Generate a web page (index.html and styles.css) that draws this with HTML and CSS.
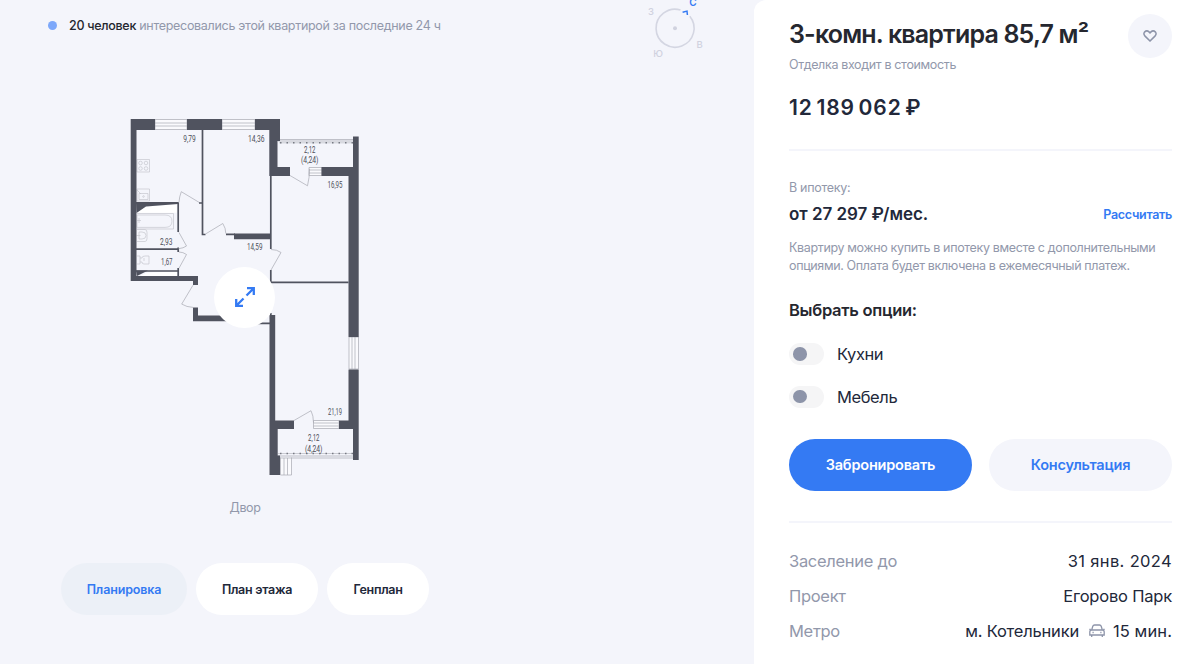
FILE: index.html
```html
<!DOCTYPE html>
<html lang="ru">
<head>
  <meta charset="UTF-8" />
  <meta name="viewport" content="width=device-width, initial-scale=1.0" />
  <title>3-комн. квартира 85,7 м²</title>
  <link rel="stylesheet" href="styles.css">
</head>
<body>

  <main class="plan">
    <div class="viewers"><i class="dot"></i><span class="viewers-text"><b>20 человек</b> интересовались этой квартирой за последние 24 ч</span></div>

    <svg class="compass" viewBox="644 0 64 62">
      <path class="ring" d="M680.500 10A19 19 0 1 0 689.800 16.200" />
      <circle cx="675" cy="28.200" r="2" />
      <path class="arrow" d="M682.600 12.300l4.400-1.200.4 3.900" />
      <text x="651" y="14.500">З</text>
      <text x="699.500" y="47.500">В</text>
      <text x="658" y="57">Ю</text>
      <text class="north" x="693" y="5.500">С</text>
    </svg>

    <div class="layout">
      <svg class="drawing" viewBox="130 118 230 358">
        <!-- fixtures -->
        <g class="fixture">
          <path d="M137 159.500h12.500v12.500H137zM137 189h12.500v12H137zM139 193.500h9v6h-9zM137 190l4 4" />
          <circle cx="140.500" cy="163" r="1.800" /><circle cx="146" cy="163" r="1.800" />
          <circle cx="140.500" cy="168.500" r="1.800" /><circle cx="146" cy="168.500" r="1.800" />
          <circle cx="143.500" cy="196.500" r=".8" />
          <path d="M137 213.500h36.500V229H137M137 215h28q7 0 7 6.200t-7 6.200h-28zM137 220.500h4M139 218v5" />
          <path d="M137 229.500h8q2 0 2 3v6q0 3-2 3h-8M139 232h3q4 0 4 3.500t-4 3.500h-3zM136.500 235.500h4" />
          <path d="M137 256h3v8h-3M140 258h2q0-2 3-2h4v8h-5q-2 0-2-2h-2M144 258v3" />
        </g>
        <!-- ventilation shafts -->
        <path class="shaft" d="M145 206.700l31.700-2.400v8.400h-40zM147 272.500l30-1v4.500h-37z" />

        <g class="glass">
          <path d="M155 119.500h32v10h-32zM155 123h32M155 126h32M222 119.500h33v10h-33zM222 123h33M222 126h33" />
          <path d="M349 337h9.500v32H349zM352 337v32M355 337v32" />
          <path d="M309 167.500h13v8h-13zM309 170h13M309 173h13M313.500 420.500H339v8h-25.500zM313.500 423h25M313.500 426h25" />
          <path d="M278 139.500h75M278 141h75M278 456h75M278 458h75M280.500 457.500v17.500h11v-17.500M284 458v17M287.500 458v17" />
        </g>
        <path class="rail" d="M279 142.800h74M278 453.500h75" />
        <path class="rail posts" d="M280 142.800h73M280 453.500h73" />

        <!-- bearing walls -->
        <path class="wall" d="M130.700 119H155v11h-18.500v146H198v9h-5v-4h-62.300zM187 119h35v11h-35zM255 119h25v22h-2.500v26H290v9h-20.700v-46H255z" />
        <path class="wall" d="M353 136.500h5.700V337h-10.200V176h-27v-9H353zM348.500 369.500h10.200V460H353v-31h-14v-8.500h9.500zM269.500 315h5.700v105.500H294v8.500h-16.300v26.500h2.300V475h-10.500z" />
        <path class="wall" d="M193 307.500h5v8h40v5.800h-45zM234 233.500h37v5.700h-37z" />
        <path class="wall" d="M136 202h42v2l-32 2.500-9.500 6.500zM136 270.500h12l-11 5.500z" />
        <!-- partitions -->
        <path class="partition" d="M202.500 130v104.500h3M199 203h4M136 203h42.200v29M136 249.200h42.200M178.200 247.500v4.500M136 271h42.200M178.200 268v8M226 234.300h9M270.800 176v73M270.800 270v12.300h77.700M238 323.300h33M270.800 313v6" />
        <!-- doors -->
        <path class="door" d="M199 202.300l-17.700-10.600q-2 5-2.300 10.500M205.500 234l17.300-10.500q3 4.500 3 10M179 232.500l7.500 13.500q-3 2.200-8 2.700M179 252q4 0 7.500 2.500l-7.500 13.700M271 249.500q6 0 10 3l-10 17.500M193 285.200l-11.300 18.900q5 3 11.300 3.300M290 175.500l17.500 10.300q2-8 2-17M294 420.500l17-9.800q2.500 5 2.500 12" />

        <text x="183.300" y="141.500" textLength="12.500" lengthAdjust="spacingAndGlyphs">9,79</text>
        <text x="248" y="141.500" textLength="16.500" lengthAdjust="spacingAndGlyphs">14,36</text>
        <text x="304" y="152.500" textLength="11.500" lengthAdjust="spacingAndGlyphs">2,12</text>
        <text x="301" y="162.900" textLength="17.500" lengthAdjust="spacingAndGlyphs">(4,24)</text>
        <text x="327.500" y="187.500" textLength="15" lengthAdjust="spacingAndGlyphs">16,95</text>
        <text x="160" y="245.300" textLength="12.500" lengthAdjust="spacingAndGlyphs">2,93</text>
        <text x="161" y="265.300" textLength="11.500" lengthAdjust="spacingAndGlyphs">1,67</text>
        <text x="247" y="250.300" textLength="15.500" lengthAdjust="spacingAndGlyphs">14,59</text>
        <text x="328" y="414.700" textLength="14" lengthAdjust="spacingAndGlyphs">21,19</text>
        <text x="308" y="441.300" textLength="11.500" lengthAdjust="spacingAndGlyphs">2,12</text>
        <text x="305" y="451.500" textLength="17.500" lengthAdjust="spacingAndGlyphs">(4,24)</text>
      </svg>
      <button class="expand" type="button" aria-label="Увеличить">
        <svg viewBox="0 0 20 20"><path d="M11.500 8.500l7-7M12 1.200h6.800V8M8.500 11.500l-7 7M1.200 12v6.800H8" /></svg>
      </button>
    </div>
    <p class="side">Двор</p>

    <nav class="tabs">
      <button class="tab active" type="button">Планировка</button>
      <button class="tab" type="button">План этажа</button>
      <button class="tab" type="button">Генплан</button>
    </nav>
  </main>

  <aside class="info">
    <header class="head">
      <div>
        <h1>3-комн. квартира 85,7 м²</h1>
        <p class="finish">Отделка входит в стоимость</p>
      </div>
      <button class="like" type="button" aria-label="В избранное">
        <svg viewBox="0 0 14 12"><path d="M7 11L1.800 5.900Q.2 3.900 1.500 2.100 3.800-.2 6 1.900l1 1 1-1Q10.200-.2 12.500 2.100q1.300 1.800-.3 3.800z" /></svg>
      </button>
    </header>
    <div class="price">12 189 062 ₽</div>

    <section class="mortgage">
      <p class="caption">В ипотеку:</p>
      <div class="row">
        <strong class="monthly">от 27 297 ₽/мес.</strong>
        <a class="calc">Рассчитать</a>
      </div>
      <p class="note">Квартиру можно купить в ипотеку вместе с дополнительными <br>опциями. Оплата будет включена в ежемесячный платеж.</p>
    </section>

    <h2>Выбрать опции:</h2>
    <div class="option"><span class="toggle"></span><span>Кухни</span></div>
    <div class="option"><span class="toggle"></span><span>Мебель</span></div>

    <div class="actions">
      <button class="btn primary" type="button">Забронировать</button>
      <button class="btn" type="button">Консультация</button>
    </div>

    <dl class="details">
      <div class="row"><dt>Заселение до</dt><dd class="date">31 янв. 2024</dd></div>
      <div class="row"><dt>Проект</dt><dd>Егорово Парк</dd></div>
      <div class="row">
        <dt>Метро</dt>
        <dd class="metro">
          <span>м. Котельники</span>
          <svg class="car" viewBox="0 0 16 14"><path d="M2.500 6.500l1.300-4.200Q4.200 1 5.500 1h5q1.300 0 1.700 1.300l1.300 4.200M2.800 6h10.400q2 0 2 2v3H.8V8q0-2 2-2zM2.700 11v2M13.300 11v2M.3 5.300h1.500M14.200 5.300h1.500M3.500 8.500h1.200M11.300 8.500h1.200" /></svg>
          <span class="minutes">15 мин.</span>
        </dd>
      </div>
    </dl>
  </aside>

</body>
</html>
```
FILE: styles.css
```css
* {
  box-sizing: border-box;
}
body {
  margin: 0;
  height: 664px;
  display: flex;
  overflow: hidden;
  background: #f4f5fb;
  color: #22283a;
  font-family: Inter, "Liberation Sans", sans-serif;
}
h1, h2, p, dl, dd {
  margin: 0;
}
button {
  border: 0;
  padding: 0;
  font-family: inherit;
  cursor: pointer;
}
svg {
  display: block;
  fill: none;
}
.plan {
  position: relative;
  width: 754px;
  flex: none;
}

/* viewers */
.viewers {
  display: flex;
  align-items: center;
  gap: 12px;
  height: 20px;
  margin: 15px 0 0 48px;
  font-size: 12.5px;
  letter-spacing: -.3px;
  color: #9298ab;
  white-space: nowrap;
}
.viewers b {
  font-weight: 500;
  color: #25272f;
}
.dot {
  width: 9px;
  height: 9px;
  border-radius: 50%;
  background: #7da8fa;
}

/* compass */
.compass {
  position: absolute;
  top: 0;
  left: 644px;
  width: 64px;
  height: 62px;
}
.compass .ring {
  stroke: #d4d6e2;
  stroke-width: 1.6;
}
.compass circle {
  fill: #d0d2df;
}
.compass .arrow {
  stroke: #347af3;
  stroke-width: 1.5;
}
.compass text {
  font-size: 9.5px;
  font-weight: 500;
  fill: #d0d2df;
  text-anchor: middle;
}
.compass .north {
  font-size: 10px;
  font-weight: 600;
  fill: #347af3;
}

/* floor plan */
.layout {
  position: relative;
  width: 230px;
  margin: 83px 0 0 130px;
}
.drawing {
  width: 230px;
  height: 358px;
}
.wall {
  fill: #50535f;
}
.partition {
  stroke: #50535f;
  stroke-width: 1.7;
}
.door, .fixture, .glass {
  stroke: #a7a9b1;
  stroke-width: .7;
}
.fixture {
  stroke: #c5c7cf;
}
.glass {
  fill: #fafafd;
}
.shaft {
  fill: #fff;
}
.rail {
  stroke: #c0c2c9;
  stroke-width: .8;
}
.posts {
  stroke: #777a83;
  stroke-width: 1.6;
  stroke-dasharray: 1.5 5;
}
.drawing text {
  font-family: Roboto, sans-serif;
  font-size: 9px;
  fill: #4c4f59;
}
.expand {
  position: absolute;
  top: 148.5px;
  left: 84px;
  width: 61px;
  height: 61px;
  display: grid;
  place-items: center;
  border-radius: 50%;
  background: #fff;
}
.expand svg {
  width: 20px;
  height: 20px;
  stroke: #347af3;
  stroke-width: 2.3;
}
.side {
  width: 230px;
  margin: 24px 0 0 130px;
  font-size: 12.5px;
  line-height: 16px;
  letter-spacing: -.4px;
  text-align: center;
  color: #9298ab;
}

.tabs {
  display: flex;
  gap: 9px;
  margin: 47px 0 0 61px;
}
.tab {
  height: 52px;
  width: 122px;
  border-radius: 26px;
  background: #fff;
  color: #22283a;
  font-size: 12.5px;
  font-weight: 600;
  letter-spacing: -.28px;
}
.tab:first-child {
  width: 126px;
  letter-spacing: -.15px;
}
.tab:last-child {
  width: 102px;
}
.tab.active {
  background: #ecf0f7;
  color: #347af3;
}

/* right panel */
.info {
  width: 446px;
  padding: 14px 28px 0 35px;
  background: #fff;
  border-top-left-radius: 12px;
  white-space: nowrap;
}
.head, .row {
  display: flex;
  justify-content: space-between;
}
h1 {
  font-size: 25px;
  line-height: 40px;
  font-weight: 600;
  letter-spacing: -.82px;
  color: #25272f;
}
.finish {
  margin-top: 2px;
  font-size: 12.5px;
  line-height: 17px;
  letter-spacing: -.35px;
  color: #9298ab;
}
.like {
  width: 44px;
  height: 44px;
  display: grid;
  place-items: center;
  border-radius: 50%;
  background: #f4f5fb;
}
.like svg {
  width: 14px;
  height: 12px;
  stroke: #8d94a9;
  stroke-width: 1.5;
}
.price {
  height: 78px;
  padding-top: 21px;
  border-bottom: 2px solid #f4f5fb;
  font-size: 21px;
  line-height: 28px;
  font-weight: 600;
  letter-spacing: .9px;
  word-spacing: -2.5px;
}
.mortgage {
  padding-top: 28px;
  font-size: 12.5px;
  color: #9298ab;
}
.caption {
  line-height: 18px;
  letter-spacing: -.3px;
}
.mortgage .row {
  height: 34px;
  align-items: center;
}
.monthly {
  font-size: 17px;
  font-weight: 600;
  letter-spacing: -.05px;
  color: #22283a;
}
.calc {
  color: #347af3;
  font-weight: 600;
  letter-spacing: -.3px;
}
.note {
  margin-top: 8px;
  line-height: 17.5px;
  letter-spacing: -.35px;
}
h2 {
  margin: 24px 0 21px;
  font-size: 16.5px;
  line-height: 24px;
  font-weight: 600;
  letter-spacing: -.28px;
  color: #25272f;
}
.option {
  display: flex;
  align-items: center;
  gap: 13px;
  height: 22px;
  margin-bottom: 20.5px;
  font-size: 16.5px;
  letter-spacing: -.4px;
}
.toggle {
  width: 35px;
  height: 22px;
  padding: 4px;
  border-radius: 11px;
  background: #f5f5f6;
}
.toggle::before {
  content: "";
  display: block;
  width: 13.5px;
  height: 13.5px;
  border-radius: 50%;
  background: #8d94a9;
}
.actions {
  display: flex;
  gap: 17px;
  margin-top: 31px;
  padding-bottom: 30px;
  border-bottom: 2px solid #f4f5fb;
}
.btn {
  flex: 1;
  height: 52px;
  border-radius: 26px;
  background: #f4f5fb;
  color: #347af3;
  font-size: 14.5px;
  font-weight: 600;
  letter-spacing: -.2px;
}
.primary {
  background: #347af3;
  color: #fff;
}
.details {
  padding-top: 21px;
  font-size: 16.5px;
  line-height: 35px;
  letter-spacing: -.2px;
}
dt {
  color: #9298ab;
  letter-spacing: -.3px;
}
.date {
  letter-spacing: .35px;
}
.metro {
  display: flex;
  align-items: center;
}
.minutes {
  letter-spacing: .1px;
}
.car {
  width: 16px;
  height: 14px;
  margin: 0 8px 0 10px;
  stroke: #8d94a9;
  stroke-width: 1.3;
}
```
